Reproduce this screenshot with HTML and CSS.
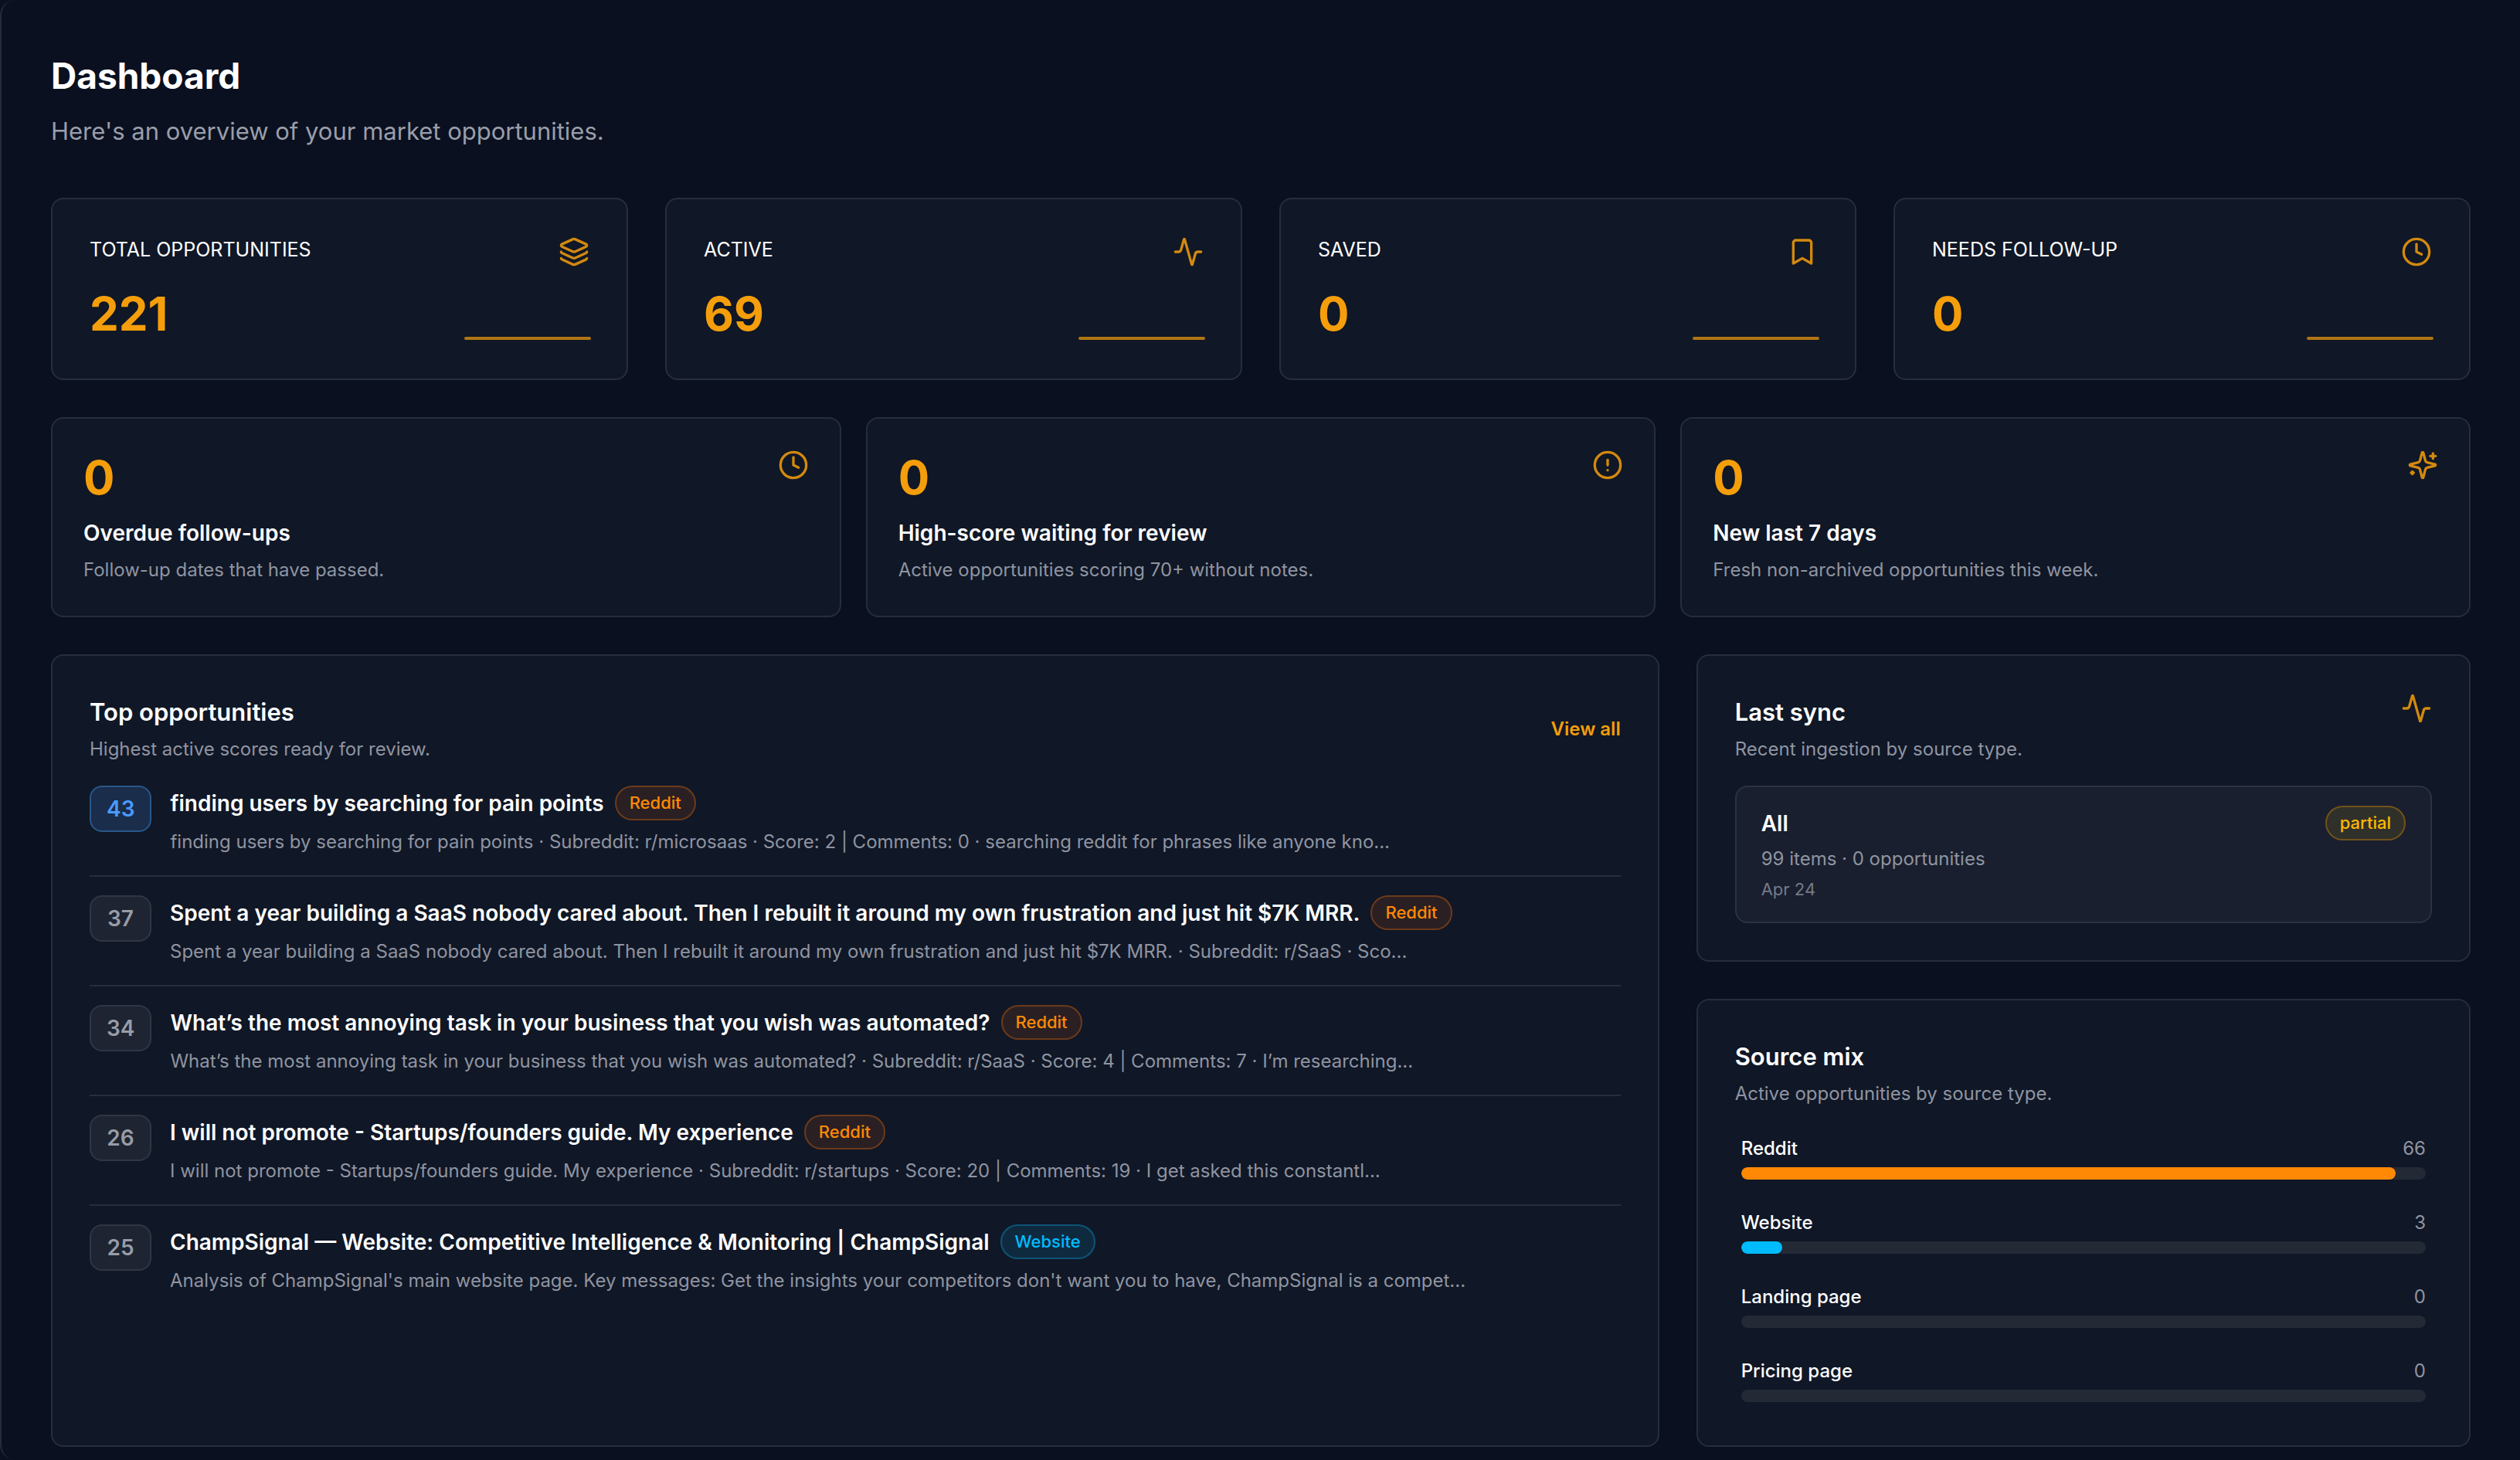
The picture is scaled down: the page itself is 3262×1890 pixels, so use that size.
FILE: index.html
```html
<!doctype html>
<html lang="en">
<head>
    <meta charset="utf-8">
    <title>Dashboard</title>
    <link rel="stylesheet" href="styles.css">
</head>
<body>
    <!-- shared icons -->
    <svg class="icon-defs" aria-hidden="true">
        <symbol id="icon-layers" viewBox="0 0 24 24">
            <path d="M12.83 2.18a2 2 0 0 0-1.66 0L2.6 6.08a1 1 0 0 0 0 1.83l8.58 3.91a2 2 0 0 0 1.66 0l8.58-3.9a1 1 0 0 0 0-1.83z"/>
            <path d="M2 12a1 1 0 0 0 .58.91l8.6 3.91a2 2 0 0 0 1.65 0l8.58-3.9A1 1 0 0 0 22 12"/>
            <path d="M2 17a1 1 0 0 0 .58.91l8.6 3.91a2 2 0 0 0 1.65 0l8.58-3.9A1 1 0 0 0 22 17"/>
        </symbol>
        <symbol id="icon-activity" viewBox="0 0 24 24">
            <path d="M22 12h-2.48a2 2 0 0 0-1.93 1.46l-2.35 8.36a.25.25 0 0 1-.48 0L9.24 2.18a.25.25 0 0 0-.48 0l-2.35 8.36A2 2 0 0 1 4.49 12H2"/>
        </symbol>
        <symbol id="icon-bookmark" viewBox="0 0 24 24">
            <path d="m19 21-7-4-7 4V5a2 2 0 0 1 2-2h10a2 2 0 0 1 2 2v16z"/>
        </symbol>
        <symbol id="icon-clock" viewBox="0 0 24 24">
            <circle cx="12" cy="12" r="10"/>
            <path d="M12 6v6l4 2"/>
        </symbol>
        <symbol id="icon-alert" viewBox="0 0 24 24">
            <circle cx="12" cy="12" r="10"/>
            <path d="M12 8v4"/>
            <path d="M12 16h.01"/>
        </symbol>
        <symbol id="icon-sparkles" viewBox="0 0 24 24">
            <path d="M9.937 15.5A2 2 0 0 0 8.5 14.063l-6.135-1.582a.5.5 0 0 1 0-.962L8.5 9.936A2 2 0 0 0 9.937 8.5l1.582-6.135a.5.5 0 0 1 .963 0L14.063 8.5A2 2 0 0 0 15.5 9.937l6.135 1.581a.5.5 0 0 1 0 .964L15.5 14.063a2 2 0 0 0-1.437 1.437l-1.582 6.135a.5.5 0 0 1-.963 0z"/>
            <path d="M20 3v4"/>
            <path d="M22 5h-4"/>
            <path d="M4 17v2"/>
            <path d="M5 18H3"/>
        </symbol>
    </svg>

    <main class="panel">
        <header class="page-header">
            <h1>Dashboard</h1>
            <p>Here's an overview of your market opportunities.</p>
        </header>

        <section class="stats">
            <div class="card stat">
                <div class="stat-top">
                    <span class="stat-label">Total opportunities</span>
                    <svg class="icon"><use href="#icon-layers"/></svg>
                </div>
                <div class="stat-bottom">
                    <span class="number">221</span>
                    <span class="sparkline"></span>
                </div>
            </div>
            <div class="card stat">
                <div class="stat-top">
                    <span class="stat-label">Active</span>
                    <svg class="icon"><use href="#icon-activity"/></svg>
                </div>
                <div class="stat-bottom">
                    <span class="number">69</span>
                    <span class="sparkline"></span>
                </div>
            </div>
            <div class="card stat">
                <div class="stat-top">
                    <span class="stat-label">Saved</span>
                    <svg class="icon"><use href="#icon-bookmark"/></svg>
                </div>
                <div class="stat-bottom">
                    <span class="number">0</span>
                    <span class="sparkline"></span>
                </div>
            </div>
            <div class="card stat">
                <div class="stat-top">
                    <span class="stat-label">Needs follow-up</span>
                    <svg class="icon"><use href="#icon-clock"/></svg>
                </div>
                <div class="stat-bottom">
                    <span class="number">0</span>
                    <span class="sparkline"></span>
                </div>
            </div>
        </section>

        <section class="queues">
            <div class="card queue">
                <div class="queue-text">
                    <span class="number">0</span>
                    <h3>Overdue follow-ups</h3>
                    <p>Follow-up dates that have passed.</p>
                </div>
                <svg class="icon"><use href="#icon-clock"/></svg>
            </div>
            <div class="card queue">
                <div class="queue-text">
                    <span class="number">0</span>
                    <h3>High-score waiting for review</h3>
                    <p>Active opportunities scoring 70+ without notes.</p>
                </div>
                <svg class="icon"><use href="#icon-alert"/></svg>
            </div>
            <div class="card queue">
                <div class="queue-text">
                    <span class="number">0</span>
                    <h3>New last 7 days</h3>
                    <p>Fresh non-archived opportunities this week.</p>
                </div>
                <svg class="icon"><use href="#icon-sparkles"/></svg>
            </div>
        </section>

        <section class="columns">
            <div class="card section">
                <div class="section-header centered">
                    <div>
                        <h2>Top opportunities</h2>
                        <p>Highest active scores ready for review.</p>
                    </div>
                    <a class="view-all" href="#">View all</a>
                </div>
                <ul class="opportunities">
                    <li>
                        <span class="score score-blue">43</span>
                        <div class="opportunity">
                            <div class="opportunity-title">
                                <h3>finding users by searching for pain points</h3>
                                <span class="pill pill-reddit">Reddit</span>
                            </div>
                            <p>finding users by searching for pain points · Subreddit: r/microsaas · Score: 2 | Comments: 0 · searching reddit for phrases like anyone kno...</p>
                        </div>
                    </li>
                    <li>
                        <span class="score">37</span>
                        <div class="opportunity">
                            <div class="opportunity-title">
                                <h3>Spent a year building a SaaS nobody cared about. Then I rebuilt it around my own frustration and just hit $7K MRR.</h3>
                                <span class="pill pill-reddit">Reddit</span>
                            </div>
                            <p>Spent a year building a SaaS nobody cared about. Then I rebuilt it around my own frustration and just hit $7K MRR. · Subreddit: r/SaaS · Sco...</p>
                        </div>
                    </li>
                    <li>
                        <span class="score">34</span>
                        <div class="opportunity">
                            <div class="opportunity-title">
                                <h3>What’s the most annoying task in your business that you wish was automated?</h3>
                                <span class="pill pill-reddit">Reddit</span>
                            </div>
                            <p>What’s the most annoying task in your business that you wish was automated? · Subreddit: r/SaaS · Score: 4 | Comments: 7 · I’m researching...</p>
                        </div>
                    </li>
                    <li>
                        <span class="score">26</span>
                        <div class="opportunity">
                            <div class="opportunity-title">
                                <h3>I will not promote - Startups/founders guide. My experience</h3>
                                <span class="pill pill-reddit">Reddit</span>
                            </div>
                            <p>I will not promote - Startups/founders guide. My experience · Subreddit: r/startups · Score: 20 | Comments: 19 · I get asked this constantl...</p>
                        </div>
                    </li>
                    <li>
                        <span class="score">25</span>
                        <div class="opportunity">
                            <div class="opportunity-title">
                                <h3>ChampSignal — Website: Competitive Intelligence &amp; Monitoring | ChampSignal</h3>
                                <span class="pill pill-website">Website</span>
                            </div>
                            <p>Analysis of ChampSignal's main website page. Key messages: Get the insights your competitors don't want you to have, ChampSignal is a compet...</p>
                        </div>
                    </li>
                </ul>
            </div>

            <div class="side">
                <div class="card section">
                    <div class="section-header">
                        <div>
                            <h2>Last sync</h2>
                            <p>Recent ingestion by source type.</p>
                        </div>
                        <svg class="icon"><use href="#icon-activity"/></svg>
                    </div>
                    <div class="sync">
                        <div class="sync-top">
                            <h3>All</h3>
                            <span class="pill pill-partial">partial</span>
                        </div>
                        <p class="sync-items">99 items · 0 opportunities</p>
                        <p class="sync-date">Apr 24</p>
                    </div>
                </div>

                <div class="card section">
                    <div class="section-header">
                        <div>
                            <h2>Source mix</h2>
                            <p>Active opportunities by source type.</p>
                        </div>
                    </div>
                    <div class="sources">
                        <a class="source" href="#">
                            <span class="source-label">Reddit <span class="count">66</span></span>
                            <span class="track"><span class="fill fill-reddit" style="width: 95.65%"></span></span>
                        </a>
                        <a class="source" href="#">
                            <span class="source-label">Website <span class="count">3</span></span>
                            <span class="track"><span class="fill fill-website" style="width: 6%"></span></span>
                        </a>
                        <a class="source" href="#">
                            <span class="source-label">Landing page <span class="count">0</span></span>
                            <span class="track"></span>
                        </a>
                        <a class="source" href="#">
                            <span class="source-label">Pricing page <span class="count">0</span></span>
                            <span class="track"></span>
                        </a>
                    </div>
                </div>
            </div>
        </section>
    </main>
</body>
</html>
```

FILE: styles.css
```css
* {
    box-sizing: border-box;
}

body {
    margin: 0;
    background: #0a101f;
    color: #fff;
    font-family: Inter, "Liberation Sans", sans-serif;
    font-size: 24px;
}

h1, h2, h3, p, ul {
    margin: 0;
    padding: 0;
}

a {
    color: inherit;
    text-decoration: none;
}

.icon-defs {
    display: none;
}

.icon {
    width: 40px;
    height: 40px;
    flex: none;
    fill: none;
    stroke: #f59e0b;
    stroke-width: 2;
    stroke-linecap: round;
    stroke-linejoin: round;
    opacity: 0.85;
}

.panel {
    min-height: 100vh;
    padding: 66px 64px 16px;
    border-left: 2px solid #242b39;
    border-radius: 20px 0 0 20px;
    background: #0a101f;
}

.page-header {
    margin-bottom: 62px;
}

.page-header h1 {
    margin-bottom: 16px;
    font-size: 46px;
    line-height: 64px;
    font-weight: 700;
}

.page-header p {
    color: #9a9eaa;
    font-size: 31px;
    line-height: 48px;
}

.card {
    border: 2px solid #262d3b;
    border-radius: 16px;
    background: #101726;
}

.number {
    color: #f59e0b;
    font-size: 60px;
    line-height: 72px;
    font-weight: 700;
}

/* stat cards */
.stats {
    display: grid;
    grid-template-columns: repeat(4, 1fr);
    gap: 48px;
    margin-bottom: 48px;
}

.stat {
    padding: 48px;
}

.stat-top,
.stat-bottom {
    display: flex;
    justify-content: space-between;
}

.stat-top {
    margin-bottom: 24px;
}

.stat-label {
    font-size: 25px;
    line-height: 34px;
    text-transform: uppercase;
}

.stat-bottom {
    align-items: flex-end;
}

.sparkline {
    width: 164px;
    height: 4px;
    margin: 0 -2px 2px 0;
    border-radius: 2px;
    background: #f59e0b;
    opacity: 0.7;
}

/* queue cards */
.queues {
    display: grid;
    grid-template-columns: repeat(3, 1fr);
    gap: 32px;
    margin-bottom: 48px;
}

.queue {
    display: flex;
    justify-content: space-between;
    padding: 40px;
}

.queue .number {
    display: block;
    margin-bottom: 16px;
}

.queue h3 {
    margin-bottom: 8px;
    font-size: 28px;
    line-height: 40px;
    font-weight: 600;
}

.queue p,
.section-header p,
.opportunity p,
.sync-items {
    color: #8f94a1;
    line-height: 39px;
}

/* lower columns */
.columns {
    display: grid;
    grid-template-columns: 1.35fr 0.65fr;
    gap: 48px;
}

.side {
    display: flex;
    flex-direction: column;
    gap: 48px;
}

.section {
    padding: 48px;
}

.section-header {
    display: flex;
    justify-content: space-between;
    margin-bottom: 28px;
}

.section-header.centered {
    align-items: center;
}

.section-header h2 {
    margin-bottom: 3px;
    font-size: 31px;
    line-height: 50px;
    font-weight: 600;
}

.view-all {
    color: #f59e0b;
    font-weight: 600;
}

.opportunities {
    list-style: none;
}

.opportunities li {
    display: flex;
    align-items: flex-start;
    gap: 24px;
    padding: 24px 0;
    border-top: 2px solid #262d3b;
}

.opportunities li:first-child {
    padding-top: 0;
    border-top: none;
}

.score {
    min-width: 80px;
    padding: 0 20px;
    border: 2px solid #303643;
    border-radius: 16px;
    background: #1e2431;
    color: #989ca8;
    font-size: 28px;
    line-height: 56px;
    font-weight: 600;
    text-align: center;
}

.score-blue {
    border-color: #285789;
    background: #1a2d4a;
    color: #4a9aff;
}

.opportunity {
    min-width: 0;
}

.opportunity-title {
    display: flex;
    align-items: center;
    gap: 14px;
    margin-bottom: 8px;
}

.opportunity h3,
.sync h3 {
    font-size: 28px;
    line-height: 40px;
    font-weight: 600;
}

.pill {
    padding: 4px 17px;
    border: 2px solid;
    border-radius: 24px;
    font-size: 22px;
    line-height: 33px;
    font-weight: 500;
}

.pill-reddit {
    border-color: #6c3a1a;
    background: #2a2024;
    color: #ff8904;
}

.pill-website {
    border-color: #0d5577;
    background: #0f2a3f;
    color: #00bcff;
}

.pill-partial {
    border-color: #715219;
    background: #30302b;
    color: #ffb900;
}

/* last sync */
.sync {
    padding: 24px 32px;
    border: 2px solid #2b3240;
    border-radius: 16px;
    background: #191f2e;
}

.sync-top {
    display: flex;
    align-items: center;
    justify-content: space-between;
    margin-bottom: 4px;
}

.sync-items {
    margin-bottom: 2px;
}

.sync-date {
    color: #757a87;
    font-size: 22px;
    line-height: 36px;
}

/* source mix */
.sources {
    display: flex;
    flex-direction: column;
    gap: 24px;
}

.source {
    display: block;
    padding: 8px;
}

.source-label {
    display: flex;
    justify-content: space-between;
    margin-bottom: 8px;
    line-height: 32px;
    font-weight: 500;
}

.count {
    color: #8f94a1;
    font-weight: 400;
}

.track {
    display: block;
    height: 16px;
    overflow: hidden;
    border-radius: 8px;
    background: #242936;
}

.fill {
    display: block;
    height: 100%;
    border-radius: 8px;
}

.fill-reddit {
    background: #ff8904;
}

.fill-website {
    background: #00bcff;
}
```
